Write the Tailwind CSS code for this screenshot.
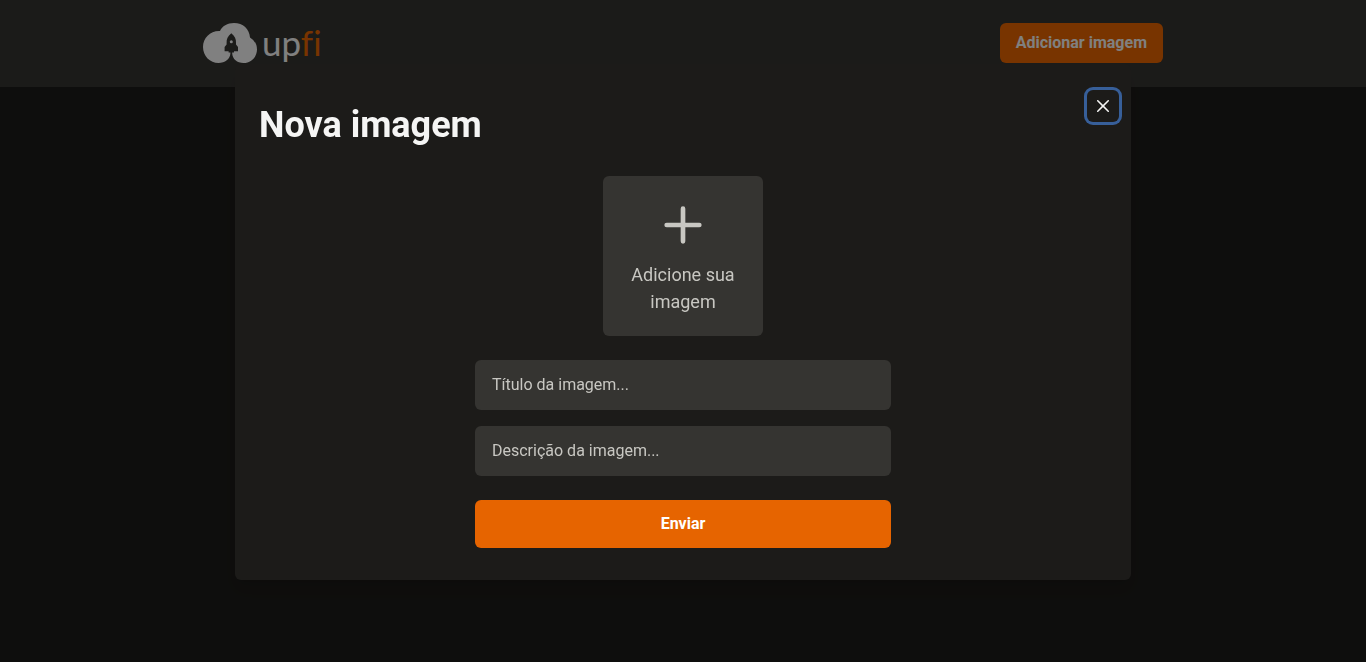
<!DOCTYPE html>
<html lang="pt-BR">
<head>
<meta charset="utf-8">
<meta name="viewport" content="width=device-width, initial-scale=1">
<title>upfi</title>
<script src="https://cdn.jsdelivr.net/npm/@tailwindcss/browser@4"></script>
</head>
<body class="min-h-screen bg-[#1c1b19] font-['Roboto','Noto_Sans',sans-serif] text-[#f5f5f4]">
<header class="bg-[#353431] py-[23px]">
  <div class="mx-auto flex h-[41px] max-w-[960px] items-start justify-between">
    <a href="#" aria-label="upfi" class="flex items-start gap-1">
      <svg class="h-10 w-[55px]" viewBox="0 0 55 40" aria-hidden="true">
        <path fill="#f5f5f5" d="M31 0c9 0 15.500 6 16 14.500A14 14 0 0 1 54 26.500C54 34 48 40 40.500 40C34 40 29.500 36 29.200 30.500V28h-1.800v2.500C27.100 36 22 40 15.500 40C7 40 0 33 0 24 0 15 7 8 16 8h1C19 3 24.500 0 31 0z"/>
        <path fill="#353431" d="M28.300 10.300c3.600 2.700 4.900 6 4.700 9.700v1.500l2 2.500v4.200h-4v1.400h-5.400v-1.400h-4V24l2-2.500V20c-.2-3.700 1.100-7 4.700-9.700z"/>
        <circle cx="28.300" cy="18.700" r="1.500" fill="#f5f5f5"/>
      </svg>
      <span class="text-[35px] leading-[38px] font-normal font-['Lato',sans-serif] [font-variant-ligatures:none]">up<span class="text-[#e66400]">fi</span></span>
    </a>
    <button type="button" class="h-10 rounded-md bg-[#e66400] px-4 font-bold">Adicionar imagem</button>
  </div>
</header>
<div class="fixed inset-0 flex items-start justify-center bg-black/48">
  <section role="dialog" aria-modal="true" aria-labelledby="dialog-title" class="relative mt-16 w-full max-w-4xl rounded-md bg-[#1c1b19] px-6 pt-[34px] pb-8 shadow-lg">
    <h1 id="dialog-title" class="text-4xl leading-[54px] font-bold">Nova imagem</h1>
    <button type="button" aria-label="Fechar" class="absolute top-[26px] right-3 flex size-8 items-center justify-center rounded-md ring-3 ring-[#375f99]">
      <svg class="size-3" viewBox="0 0 24 24" aria-hidden="true"><path fill="currentColor" d="M.439 21.440a1.500 1.500 0 0 0 2.122 2.121l9.262-9.261a.25.250 0 0 1 .354 0l9.262 9.263a1.500 1.500 0 1 0 2.122-2.121L14.300 12.177a.25.250 0 0 1 0-.354l9.263-9.262A1.500 1.500 0 0 0 21.439.440L12.177 9.700a.25.250 0 0 1-.354 0L2.561.440A1.500 1.500 0 0 0 .439 2.561L9.700 11.823a.25.250 0 0 1 0 .354z"/></svg>
    </button>
    <form class="mx-auto mt-6 flex max-w-[416px] flex-col">
      <label class="mx-auto flex size-40 cursor-pointer flex-col items-center rounded-md bg-[#353431] px-4 pt-[21px] text-center text-lg leading-[27px] text-[#c8c7c2]">
        <svg class="mb-2 size-14" viewBox="0 0 24 24" fill="none" stroke="currentColor" stroke-width="2" stroke-linecap="round" aria-hidden="true"><path d="M12 5v14M5 12h14"/></svg>
        Adicione sua imagem
        <input type="file" class="sr-only">
      </label>
      <input type="text" aria-label="Título da imagem" placeholder="Título da imagem..." class="mt-6 h-[50px] rounded-md bg-[#353431] px-[17px] pb-0.5 placeholder:text-[#c8c7c2]">
      <input type="text" aria-label="Descrição da imagem" placeholder="Descrição da imagem..." class="mt-4 h-[50px] rounded-md bg-[#353431] px-[17px] pb-0.5 placeholder:text-[#c8c7c2]">
      <button type="submit" class="mt-6 h-12 rounded-md bg-[#e66400] font-bold text-white">Enviar</button>
    </form>
  </section>
</div>
</body>
</html>
